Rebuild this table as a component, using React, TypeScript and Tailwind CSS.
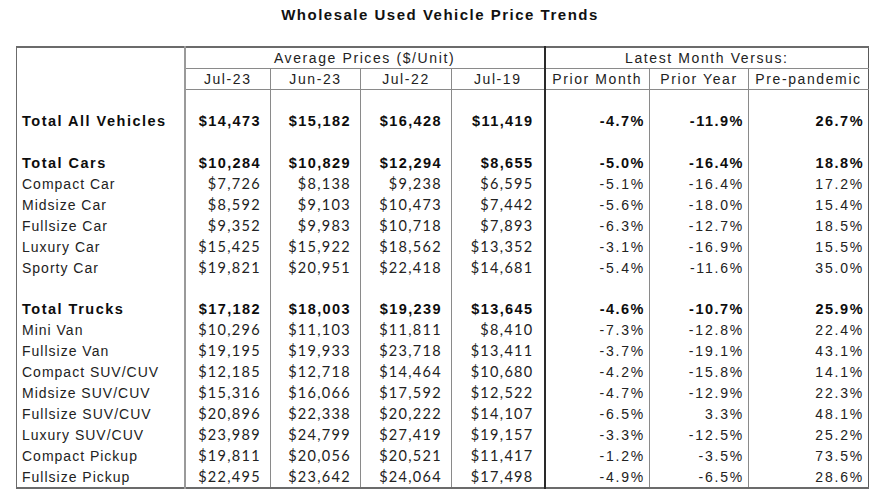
import React from 'react';

type Row =
  | { kind: 'blank'; short?: boolean }
  | { kind: 'data'; label: string; bold?: boolean; prices: string[]; pct: string[] };

const rows: Row[] = [
  { kind: 'blank' },
  { kind: 'data', label: 'Total All Vehicles', bold: true, prices: ['$14,473', '$15,182', '$16,428', '$11,419'], pct: ['-4.7%', '-11.9%', '26.7%'] },
  { kind: 'blank' },
  { kind: 'data', label: 'Total Cars', bold: true, prices: ['$10,284', '$10,829', '$12,294', '$8,655'], pct: ['-5.0%', '-16.4%', '18.8%'] },
  { kind: 'data', label: 'Compact Car', prices: ['$7,726', '$8,138', '$9,238', '$6,595'], pct: ['-5.1%', '-16.4%', '17.2%'] },
  { kind: 'data', label: 'Midsize Car', prices: ['$8,592', '$9,103', '$10,473', '$7,442'], pct: ['-5.6%', '-18.0%', '15.4%'] },
  { kind: 'data', label: 'Fullsize Car', prices: ['$9,352', '$9,983', '$10,718', '$7,893'], pct: ['-6.3%', '-12.7%', '18.5%'] },
  { kind: 'data', label: 'Luxury Car', prices: ['$15,425', '$15,922', '$18,562', '$13,352'], pct: ['-3.1%', '-16.9%', '15.5%'] },
  { kind: 'data', label: 'Sporty Car', prices: ['$19,821', '$20,951', '$22,418', '$14,681'], pct: ['-5.4%', '-11.6%', '35.0%'] },
  { kind: 'blank', short: true },
  { kind: 'data', label: 'Total Trucks', bold: true, prices: ['$17,182', '$18,003', '$19,239', '$13,645'], pct: ['-4.6%', '-10.7%', '25.9%'] },
  { kind: 'data', label: 'Mini Van', prices: ['$10,296', '$11,103', '$11,811', '$8,410'], pct: ['-7.3%', '-12.8%', '22.4%'] },
  { kind: 'data', label: 'Fullsize Van', prices: ['$19,195', '$19,933', '$23,718', '$13,411'], pct: ['-3.7%', '-19.1%', '43.1%'] },
  { kind: 'data', label: 'Compact SUV/CUV', prices: ['$12,185', '$12,718', '$14,464', '$10,680'], pct: ['-4.2%', '-15.8%', '14.1%'] },
  { kind: 'data', label: 'Midsize SUV/CUV', prices: ['$15,316', '$16,066', '$17,592', '$12,522'], pct: ['-4.7%', '-12.9%', '22.3%'] },
  { kind: 'data', label: 'Fullsize SUV/CUV', prices: ['$20,896', '$22,338', '$20,222', '$14,107'], pct: ['-6.5%', '3.3%', '48.1%'] },
  { kind: 'data', label: 'Luxury SUV/CUV', prices: ['$23,989', '$24,799', '$27,419', '$19,157'], pct: ['-3.3%', '-12.5%', '25.2%'] },
  { kind: 'data', label: 'Compact Pickup', prices: ['$19,811', '$20,056', '$20,521', '$11,417'], pct: ['-1.2%', '-3.5%', '73.5%'] },
  { kind: 'data', label: 'Fullsize Pickup', prices: ['$22,495', '$23,642', '$24,064', '$17,498'], pct: ['-4.9%', '-6.5%', '28.6%'] },
];

// vertical rules of each body column, left to right
const colBorders = [
  'border-l border-l-[#6b6b6b] border-r-2 border-r-[#9a9a9a]',
  'border-r border-r-[#8a8a8a]',
  'border-r border-r-[#8a8a8a]',
  'border-r border-r-[#8a8a8a]',
  'border-r-2 border-r-[#2a2a2a]',
  'border-r border-r-[#8a8a8a]',
  'border-r border-r-[#8a8a8a]',
  'border-r border-r-[#5a5a5a]',
];

const dates = ['Jul-23', 'Jun-23', 'Jul-22', 'Jul-19'];
const versus = ['Prior Month', 'Prior Year', 'Pre-pandemic'];

export default function App() {
  return (
    <div className="w-[880px] h-[495px] bg-white text-[#161616] font-['Liberation_Sans',Arial,sans-serif] overflow-hidden">
      <div className="h-[46px] pt-[5px] text-center text-[15px] leading-[20px] font-bold tracking-[1.5px] text-[#111]">
        Wholesale Used Vehicle Price Trends
      </div>
      <table className="ml-[16px] table-fixed border-collapse border-t-2 border-t-[#6b6b6b] w-[852px]">
        <colgroup>
          <col className="w-[168px]" />
          <col className="w-[86px]" />
          <col className="w-[90px]" />
          <col className="w-[91px]" />
          <col className="w-[93px]" />
          <col className="w-[105px]" />
          <col className="w-[99px]" />
          <col className="w-[120px]" />
        </colgroup>
        <thead className="text-[14px] tracking-[1.6px] text-[#222]">
          <tr className="h-[21px]">
            <td rowSpan={2} className={`p-0 ${colBorders[0]}`} />
            <td colSpan={4} className="p-0 text-center leading-[20px] border-b border-b-[#8a8a8a] border-r-2 border-r-[#2a2a2a]">
              Average Prices ($/Unit)
            </td>
            <td colSpan={3} className="p-0 text-center leading-[20px] border-b border-b-[#8a8a8a] border-r border-r-[#5a5a5a]">
              Latest Month Versus:
            </td>
          </tr>
          <tr className="h-[21px]">
            {dates.map((d, i) => (
              <td key={d} className={`p-0 text-center leading-[20px] border-b border-b-[#8a8a8a] ${colBorders[i + 1]}`}>
                {d}
              </td>
            ))}
            {versus.map((d, i) => (
              <td key={d} className={`p-0 text-center leading-[20px] whitespace-nowrap border-b border-b-[#8a8a8a] ${colBorders[i + 5]}`}>
                {d}
              </td>
            ))}
          </tr>
        </thead>
        <tbody className="border-b-2 border-b-[#6b6b6b]">
          {rows.map((r, idx) =>
            r.kind === 'blank' ? (
              <tr key={idx} className={r.short ? 'h-[20px]' : 'h-[21px]'}>
                {colBorders.map((b, i) => (
                  <td key={i} className={`p-0 ${b}`} />
                ))}
              </tr>
            ) : (
              <tr key={idx} className={`h-[21px] text-[14px] leading-[20px] ${r.bold ? 'font-bold text-[#0d0d0d]' : 'text-[#222]'}`}>
                <td className={`p-0 pl-[5px] whitespace-nowrap ${r.bold ? 'tracking-[1.5px] text-[14.5px]' : 'tracking-[1px]'} ${colBorders[0]}`}>
                  {r.label}
                </td>
                {r.prices.map((p, i) => (
                  <td
                    key={i}
                    className={`p-0 text-right whitespace-nowrap ${i === 3 ? 'pr-[10px]' : 'pr-[9px]'} ${
                      r.bold ? 'tracking-[1.4px] text-[14.5px]' : "font-['Lato',sans-serif] text-[14.5px] tracking-[1.3px]"
                    } ${colBorders[i + 1]}`}
                  >
                    {p}
                  </td>
                ))}
                {r.pct.map((p, i) => (
                  <td
                    key={i}
                    className={`p-0 text-right whitespace-nowrap pr-[4px] ${r.bold ? 'tracking-[1.5px] text-[14.5px]' : 'tracking-[1.8px]'} ${colBorders[i + 5]}`}
                  >
                    {p}
                  </td>
                ))}
              </tr>
            )
          )}
        </tbody>
      </table>
    </div>
  );
}
